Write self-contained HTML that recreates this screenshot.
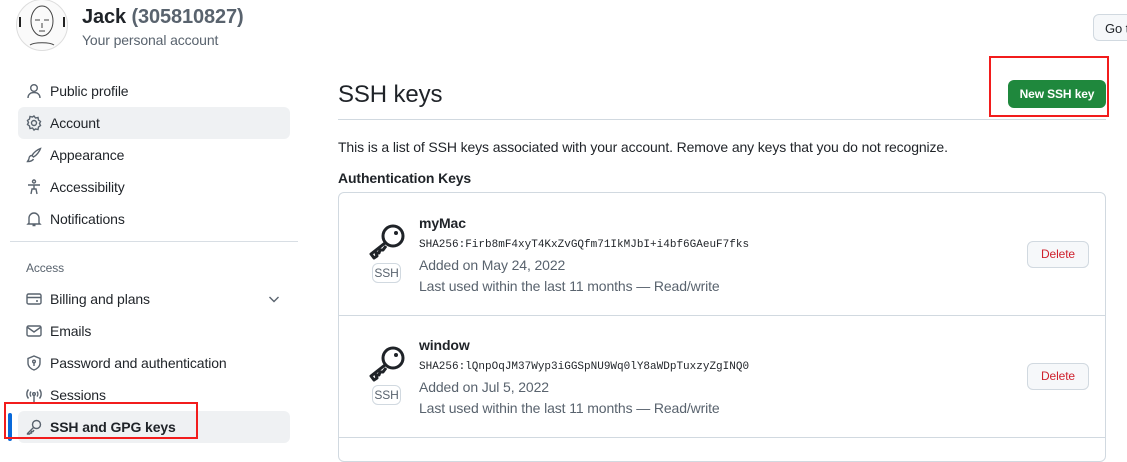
<!DOCTYPE html>
<html><head><meta charset="utf-8"><style>
*{box-sizing:border-box;margin:0;padding:0}
body{width:1127px;height:445px;overflow:hidden;background:#fff;font-family:"Liberation Sans",sans-serif;color:#1f2328;font-size:14px;position:relative;letter-spacing:-0.12px}
.a{position:absolute;white-space:nowrap}
.nav{position:absolute;left:18px;width:272px;height:32px;border-radius:6px}
.nav .t{position:absolute;left:32px;top:8px;font-size:14px}
.nav svg{position:absolute;left:8px;top:8px}
.gray{color:#59636e}
.mono{font-family:"Liberation Mono",monospace;font-size:11px;letter-spacing:0}
.btn{position:absolute;border:1px solid #d1d9e0;border-radius:6px;background:#f6f8fa;font-size:12px;font-weight:bold;text-align:center}
</style></head><body>
<div class="a" style="left:16px;top:-1px;width:52px;height:52px;border-radius:50%;border:1px solid #ddd;background:#fafafa"></div>
<svg class="a" style="left:16px;top:-1px" width="52" height="52" fill="none" stroke="#444" stroke-width="1"><ellipse cx="26" cy="22" rx="11" ry="15"/><path d="M19 21h5M28 21h5M26 24v5M23 32h6M14 46c4-3 20-3 24 0"/><path d="M4 18v10M48 18v10" stroke="#222" stroke-width="2"/></svg>
<div class="a" style="left:82px;top:6px;font-size:20px;font-weight:600">Jack <span class="gray">(305810827)</span></div>
<div class="a gray" style="left:82px;top:32px;font-size:14px">Your personal account</div>
<div class="btn" style="left:1093px;top:14px;width:50px;height:27px;padding-top:6px;text-align:left;padding-left:11px;font-weight:normal;font-size:13px;background:#f6f8fa">Go to</div>

<div class="nav" style="top:75px"><svg width="16" height="16" fill="none" stroke="#59636e" stroke-width="1.4"><circle cx="8" cy="5" r="3.3"/><path d="M2 15c0-4 3-5.5 6-5.5s6 1.5 6 5.5"/></svg><span class="t">Public profile</span></div>
<div class="nav" style="top:107px;background:#eff1f3"><svg width="16" height="16" fill="none" stroke="#59636e" stroke-width="1.4"><circle cx="8" cy="8" r="2.5"/><path d="M8 1l1.5 2 2.5-.5.5 2.5 2 1.5-1 2 1 2-2 1.5-.5 2.5-2.5-.5L8 15l-1.5-2-2.5.5-.5-2.5-2-1.5 1-2-1-2 2-1.5.5-2.5 2.5.5z"/></svg><span class="t">Account</span></div>
<div class="nav" style="top:139px"><svg width="16" height="16" fill="none" stroke="#59636e" stroke-width="1.4"><path d="M14.5 1.5c-3 1-7 4-8.5 7l1.5 1.5c3-1.5 6-5.5 7-8.5zM6 8.5c-2 0-3 1.5-3 3 0 1-1 2-1.5 3 2 0 5-.5 6-2.5"/></svg><span class="t">Appearance</span></div>
<div class="nav" style="top:171px"><svg width="16" height="16" fill="none" stroke="#59636e" stroke-width="1.4"><circle cx="8" cy="2.5" r="1.5"/><path d="M2 6h12M8 6v4M5 15l1-5h4l1 5"/></svg><span class="t">Accessibility</span></div>
<div class="nav" style="top:203px"><svg width="16" height="16" fill="none" stroke="#59636e" stroke-width="1.4"><path d="M3 12V7a5 5 0 0110 0v5l1 1H2zM6.5 14.5h3"/></svg><span class="t">Notifications</span></div>
<div class="a" style="left:10px;top:241px;width:288px;height:1px;background:#d8dee4"></div>
<div class="a gray" style="left:26px;top:261px;font-size:12px">Access</div>
<div class="nav" style="top:283px"><svg width="16" height="16" fill="none" stroke="#59636e" stroke-width="1.4"><rect x="1" y="3" width="14" height="10" rx="1.5"/><path d="M1 6.5h14M10 10h2"/></svg><span class="t">Billing and plans</span><svg style="left:248px" width="16" height="16" fill="none" stroke="#59636e" stroke-width="1.4"><path d="M3.5 6l4.5 4.5L12.5 6"/></svg></div>
<div class="nav" style="top:315px"><svg width="16" height="16" fill="none" stroke="#59636e" stroke-width="1.4"><rect x="1" y="3" width="14" height="10" rx="1.5"/><path d="M1 4l7 5 7-5"/></svg><span class="t">Emails</span></div>
<div class="nav" style="top:347px"><svg width="16" height="16" fill="none" stroke="#59636e" stroke-width="1.4"><path d="M8 1l6 2.5V8c0 3.5-3 6-6 7-3-1-6-3.5-6-7V3.5z"/><circle cx="8" cy="6.5" r="1.3"/><path d="M8 8v3"/></svg><span class="t">Password and authentication</span></div>
<div class="nav" style="top:379px"><svg width="16" height="16" fill="none" stroke="#59636e" stroke-width="1.4"><circle cx="8" cy="7" r="1.3"/><path d="M8 8.5V15M5 4.5a4 4 0 000 5M11 4.5a4 4 0 010 5M2.5 2.5a7 7 0 000 9M13.5 2.5a7 7 0 010 9"/></svg><span class="t">Sessions</span></div>
<div class="nav" style="top:411px;background:#eff1f3"><svg width="16" height="16" fill="none" stroke="#59636e" stroke-width="1.4"><circle cx="10.5" cy="5.5" r="4"/><path d="M7.5 8.5L1.5 14.5v.5h2l1-1h1v-1.5h1.5L8 11"/></svg><span class="t" style="font-weight:600">SSH and GPG keys</span></div>
<div class="a" style="left:8px;top:413px;width:4px;height:28px;border-radius:2px;background:#0969da"></div>
<div class="a" style="left:4px;top:402px;width:194px;height:37px;border:2px solid #f21c1c"></div>

<div class="a" style="left:338px;top:81px;font-size:24px">SSH keys</div>
<div class="a" style="left:338px;top:119px;width:768px;height:1px;background:#d1d9e0"></div>
<div class="a" style="left:1008px;top:80px;width:98px;height:28px;border-radius:6px;background:#1f883d;color:#fff;font-size:12px;font-weight:bold;text-align:center;line-height:28px">New SSH key</div>
<div class="a" style="left:989px;top:56px;width:120px;height:61px;border:2px solid #f21c1c"></div>
<div class="a" style="left:338px;top:139px">This is a list of SSH keys associated with your account. Remove any keys that you do not recognize.</div>
<div class="a" style="left:338px;top:170px;font-weight:600">Authentication Keys</div>
<div class="a" style="left:338px;top:192px;width:768px;height:270px;border:1px solid #d1d9e0;border-radius:6px"></div>
<div class="a" style="left:338px;top:315px;width:768px;height:1px;background:#d1d9e0"></div>
<div class="a" style="left:338px;top:437px;width:768px;height:1px;background:#d1d9e0"></div>

<svg class="a" style="left:368px;top:222px" width="40" height="40" fill="none" stroke="#1f2328" stroke-width="3" stroke-linejoin="round"><circle cx="25" cy="14" r="10"/><circle cx="28" cy="11" r="2" fill="#1f2328" stroke="none"/><path d="M17 21L3 32l3 4 3-2-1-3h3l1-3h3l3-4"/></svg>
<div class="a" style="left:372px;top:263px;width:29px;height:20px;border:1px solid #d1d9e0;border-radius:6px;font-size:12px;color:#59636e;text-align:center;line-height:18px">SSH</div>
<div class="a" style="left:419px;top:215px;font-weight:600">myMac</div>
<div class="a mono" style="left:419px;top:239px">SHA256:Firb8mF4xyT4KxZvGQfm71IkMJbI+i4bf6GAeuF7fks</div>
<div class="a gray" style="left:419px;top:257px">Added on May 24, 2022</div>
<div class="a gray" style="left:419px;top:278px">Last used within the last 11 months — <span>Read/write</span></div>
<div class="btn" style="left:1027px;top:241px;width:62px;height:27px;line-height:25px;color:#cf222e;font-weight:normal;font-size:12px">Delete</div>

<svg class="a" style="left:368px;top:344px" width="40" height="40" fill="none" stroke="#1f2328" stroke-width="3" stroke-linejoin="round"><circle cx="25" cy="14" r="10"/><circle cx="28" cy="11" r="2" fill="#1f2328" stroke="none"/><path d="M17 21L3 32l3 4 3-2-1-3h3l1-3h3l3-4"/></svg>
<div class="a" style="left:372px;top:385px;width:29px;height:20px;border:1px solid #d1d9e0;border-radius:6px;font-size:12px;color:#59636e;text-align:center;line-height:18px">SSH</div>
<div class="a" style="left:419px;top:337px;font-weight:600">window</div>
<div class="a mono" style="left:419px;top:361px">SHA256:lQnpOqJM37Wyp3iGGSpNU9Wq0lY8aWDpTuxzyZgINQ0</div>
<div class="a gray" style="left:419px;top:379px">Added on Jul 5, 2022</div>
<div class="a gray" style="left:419px;top:400px">Last used within the last 11 months — <span>Read/write</span></div>
<div class="btn" style="left:1027px;top:363px;width:62px;height:27px;line-height:25px;color:#cf222e;font-weight:normal;font-size:12px">Delete</div>
</body></html>
